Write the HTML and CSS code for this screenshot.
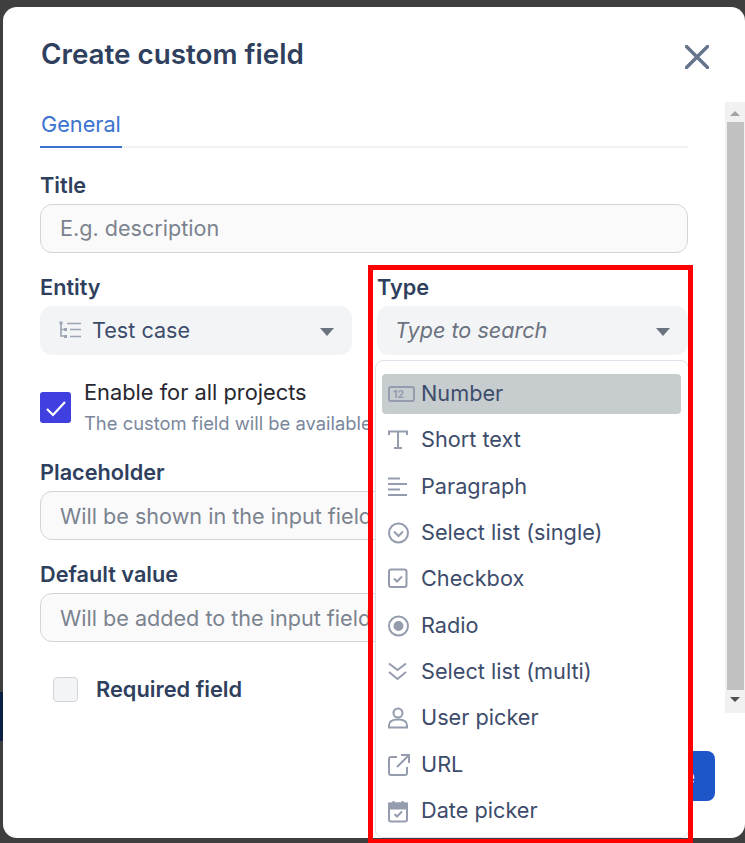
FILE: index.html
```html
<!DOCTYPE html>
<html lang="en">
<head>
    <meta charset="UTF-8">
    <meta name="viewport" content="width=device-width, initial-scale=1.0">
    <title>Create custom field</title>
    <link rel="stylesheet" href="styles.css">
</head>
<body>

<div class="backdrop-strip"></div>

<div class="modal">
    <div class="modal-header">
        <h1>Create custom field</h1>
        <svg class="close" width="24" height="24" viewBox="0 0 24 24"><path d="M1.5 1.5l21 21M22.5 1.5l-21 21"/></svg>
    </div>

    <div class="modal-scroll">
        <div class="content">
            <div class="tabs"><span class="tab">General</span></div>

            <label class="label label-title">Title</label>
            <input class="input" placeholder="E.g. description">

            <div class="two-cols">
                <div class="col">
                    <label class="label">Entity</label>
                    <div class="select">
                        <svg class="entity-icon" width="22" height="18" viewBox="0 0 22 18">
                            <path d="M2 2v13h3M2 8.5h3"/>
                            <rect x="0.5" y="0.5" width="3" height="3"/>
                            <rect x="5" y="7" width="3" height="3"/>
                            <rect x="5" y="14" width="3" height="3"/>
                            <path d="M8 2.5h14M11 8.5h11M11 15.5h11"/>
                        </svg>
                        <span class="select-value">Test case</span>
                        <span class="caret"></span>
                    </div>
                </div>
                <div class="col col-type">
                    <label class="label">Type</label>
                    <div class="select">
                        <input class="type-search" placeholder="Type to search">
                        <span class="caret"></span>
                    </div>

                    <ul class="dropdown">
                        <li class="item item-active">
                            <svg width="27" height="24" viewBox="0 0 27 24"><rect x="1" y="5" width="25" height="14" rx="2"/><text x="5" y="16">12</text></svg>
                            Number
                        </li>
                        <li class="item">
                            <svg width="27" height="24" viewBox="0 0 27 24"><path d="M1 7V3.5h18V7M10 3.5V20M6 20h8"/></svg>
                            Short text
                        </li>
                        <li class="item">
                            <svg width="27" height="24" viewBox="0 0 27 24"><path d="M0 3.5h12M0 9h19M0 14.5h12M0 20h19"/></svg>
                            Paragraph
                        </li>
                        <li class="item">
                            <svg width="27" height="24" viewBox="0 0 27 24"><circle cx="10.5" cy="12" r="9.5"/><path d="M6 10.5l4.5 4.5 4.5-4.5"/></svg>
                            Select list (single)
                        </li>
                        <li class="item">
                            <svg width="27" height="24" viewBox="0 0 27 24"><rect x="1" y="2.5" width="17.5" height="17.5" rx="2"/><path d="M6 11.5l3 3 5-5"/></svg>
                            Checkbox
                        </li>
                        <li class="item">
                            <svg width="27" height="24" viewBox="0 0 27 24"><circle cx="10.5" cy="12" r="9.5"/><circle class="fill" cx="10.5" cy="12" r="4"/></svg>
                            Radio
                        </li>
                        <li class="item">
                            <svg width="27" height="24" viewBox="0 0 27 24"><path d="M1 3.5l8.5 6.5L18 3.5M1 12l8.5 7L18 12"/></svg>
                            Select list (multi)
                        </li>
                        <li class="item">
                            <svg width="27" height="24" viewBox="0 0 27 24"><circle cx="10" cy="7" r="4.5"/><path d="M1 21.5v-2c0-3.5 3-6 9-6s9 2.5 9 6v2z"/></svg>
                            User picker
                        </li>
                        <li class="item">
                            <svg width="27" height="24" viewBox="0 0 27 24"><path d="M9 4H3a2 2 0 0 0-2 2v14a2 2 0 0 0 2 2h14a2 2 0 0 0 2-2v-6M9 14L21 2M13 2h8v8"/></svg>
                            URL
                        </li>
                        <li class="item">
                            <svg width="27" height="24" viewBox="0 0 27 24"><rect x="1" y="4.5" width="18" height="18" rx="2"/><rect class="fill" x="1" y="4.5" width="18" height="5"/><path d="M5.5 2v3M14.5 2v3M6.5 15l2.5 2.5 5-5"/></svg>
                            Date picker
                        </li>
                    </ul>
                </div>
            </div>

            <div class="enable-row">
                <span class="checkbox-on">
                    <svg width="24" height="24" viewBox="0 0 24 24"><path d="M3 13l6 6L21 6"/></svg>
                </span>
                <div>
                    <div class="enable-title">Enable for all projects</div>
                    <div class="enable-sub">The custom field will be available</div>
                </div>
            </div>

            <label class="label">Placeholder</label>
            <input class="input input-tall" placeholder="Will be shown in the input field">

            <label class="label label-default">Default value</label>
            <input class="input input-tall" placeholder="Will be added to the input field">

            <div class="required-row">
                <span class="checkbox-off"></span>
                <span class="required-label">Required field</span>
            </div>
        </div>

        <div class="scrollbar">
            <span class="arrow-up"></span>
            <div class="thumb"></div>
            <span class="arrow-down"></span>
        </div>
    </div>

    <div class="modal-footer">
        <button class="btn">Create</button>
    </div>
</div>

<!-- red annotation around the type dropdown -->
<div class="highlight-box"></div>

</body>
</html>
```

FILE: styles.css
```css
* {
    box-sizing: border-box;
}
html, body {
    height: 100%;
}
body {
    margin: 0;
    background-color: #3f3f3f;
    font-family: "Inter", "Noto Sans", sans-serif;
    overflow: hidden;
}
.backdrop-strip {
    position: absolute;
    left: 0;
    top: 692px;
    width: 3px;
    height: 49px;
    background-color: #0b1f44;
}
.modal {
    margin: 7px 0 0 3px;
    width: 742px;
    height: 831px;
    background-color: #fff;
    border-radius: 14px;
    overflow: hidden;
    display: flex;
    flex-direction: column;
    position: relative;
}
.modal-header {
    height: 95px;
    padding: 30px 36px 0 38px;
    display: flex;
    justify-content: space-between;
    align-items: flex-start;
}
h1 {
    margin: 0;
    font-size: 27.8px;
    line-height: 34px;
    font-weight: 600;
    color: #2f3f5e;
}
.close {
    margin-top: 8px;
}
.close path {
    fill: none;
    stroke: #64748b;
    stroke-width: 3.4;
    stroke-linecap: round;
}
.modal-scroll {
    height: 611px;
    display: flex;
    justify-content: space-between;
}
.content {
    width: 648px;
    margin-left: 37px;
}
.tabs {
    height: 46px;
    border-bottom: 2px solid #f0f1f3;
    display: flex;
}
.tab {
    width: 82px;
    height: 46px;
    padding-left: 1px;
    font-size: 21.7px;
    line-height: 45px;
    color: #3b72d0;
    border-bottom: 2px solid #3b72d0;
}
.label {
    display: block;
    height: 24px;
    margin-bottom: 6px;
    font-size: 21.7px;
    line-height: 24px;
    font-weight: 600;
    color: #2f3f5e;
}
.label-title, .two-cols .label {
    line-height: 22px;
}
.label-title {
    margin-top: 26px;
}
.label-default {
    margin-top: 21.5px;
}
.input {
    display: block;
    width: 100%;
    height: 48.75px;
    padding: 0 19px;
    background-color: #fafafb;
    border: 1px solid #d1d5db;
    border-radius: 12px;
    font-family: inherit;
    font-size: 21.6px;
    outline: none;
}
.input-tall {
    height: 49.5px;
    margin-top: 7px;
}
.input::placeholder {
    color: #7b838f;
    opacity: 1;
}
.two-cols {
    display: flex;
    gap: 25px;
    margin-top: 23.25px;
}
.col {
    width: 312px;
}
.col-type {
    width: 311px;
    position: relative;
}
.select {
    height: 48.75px;
    padding: 0 18px 0 19px;
    background-color: #f3f4f6;
    border-radius: 12px;
    display: flex;
    align-items: center;
}
.col-type .select {
    padding-left: 18px;
}
.entity-icon {
    flex-shrink: 0;
    margin-right: 11px;
}
.entity-icon path {
    fill: none;
    stroke: #9aa3b2;
    stroke-width: 1.6;
}
.entity-icon rect {
    fill: #9aa3b2;
}
.select-value {
    flex: 1;
    font-size: 21.6px;
    color: #3d4c6b;
}
.type-search {
    flex: 1;
    min-width: 0;
    border: none;
    padding: 0;
    background: transparent;
    font-family: inherit;
    font-size: 21.6px;
    font-style: italic;
    outline: none;
}
.type-search::placeholder {
    color: #6b7280;
    opacity: 1;
}
.caret {
    width: 0;
    height: 0;
    flex-shrink: 0;
    margin-top: 3px;
    border-left: 7px solid transparent;
    border-right: 7px solid transparent;
    border-top: 8px solid #6b7280;
}
.dropdown {
    position: absolute;
    left: -2px;
    top: 84px;
    width: 314px;
    height: 478px;
    margin: 0;
    padding: 13px 7px 0 6px;
    list-style: none;
    background-color: #fff;
    border: 1px solid #dfe2ea;
    border-radius: 8px;
    display: flex;
    flex-direction: column;
    gap: 6.35px;
    z-index: 2;
}
.item {
    height: 40px;
    flex-shrink: 0;
    padding: 0 0 2px 6px;
    border-radius: 4px;
    display: flex;
    align-items: center;
    gap: 6px;
    font-size: 21.7px;
    color: #3d4c6b;
}
.item-active {
    background-color: #c7cccf;
}
.item svg {
    flex-shrink: 0;
    margin-top: 2px;
    fill: none;
    stroke: #949cad;
    stroke-width: 2;
}
.item svg .fill {
    fill: #949cad;
}
.item svg text {
    fill: #949cad;
    stroke: none;
    font-family: "Inter", sans-serif;
    font-size: 10.5px;
    font-weight: 700;
}
.enable-row {
    display: flex;
    align-items: center;
    gap: 13px;
    margin-top: 24px;
    height: 57px;
    margin-bottom: 24px;
}
.checkbox-on {
    width: 31px;
    height: 31px;
    margin-top: 1px;
    border-radius: 3px;
    background-color: #4040e0;
    display: flex;
    align-items: center;
    justify-content: center;
}
.checkbox-on path {
    fill: none;
    stroke: #fff;
    stroke-width: 2.2;
}
.enable-title {
    font-size: 21.8px;
    line-height: 26px;
    color: #27272f;
}
.enable-sub {
    margin-top: 5px;
    padding-top: 1px;
    font-size: 18.4px;
    line-height: 25px;
    white-space: nowrap;
    color: #7a879c;
}
.required-row {
    display: flex;
    align-items: center;
    gap: 18px;
    height: 25px;
    margin: 34.5px 0 0 13px;
}
.checkbox-off {
    width: 25px;
    height: 25px;
    background-color: #f3f4f6;
    border: 1px solid #d1d5db;
    border-radius: 4px;
}
.required-label {
    font-size: 21.8px;
    line-height: 25px;
    font-weight: 600;
    color: #2f3f5e;
}
.scrollbar {
    width: 20px;
    height: 611px;
    background-color: #f1f1f1;
    display: flex;
    flex-direction: column;
    align-items: center;
}
.thumb {
    width: 17px;
    height: 568px;
    background-color: #c1c1c1;
}
.arrow-up, .arrow-down {
    width: 0;
    height: 0;
    border-left: 5px solid transparent;
    border-right: 5px solid transparent;
}
.arrow-up {
    margin: 9px 0 6px;
    border-bottom: 5px solid #a3a3a3;
}
.arrow-down {
    margin: 7px 0 0;
    border-top: 5px solid #505050;
}
.modal-footer {
    padding: 38px 30px 0 0;
    display: flex;
    justify-content: flex-end;
}
.btn {
    width: 140px;
    height: 50px;
    padding: 0 20px 0 0;
    text-align: right;
    font-family: inherit;
    font-size: 21.6px;
    font-weight: 500;
    color: #fff;
    background-color: #1d56c9;
    border: none;
    border-radius: 8px;
}
.highlight-box {
    position: absolute;
    left: 368px;
    top: 265px;
    width: 325px;
    height: 579px;
    border: 5px solid #ff0000;
    z-index: 3;
}
```
